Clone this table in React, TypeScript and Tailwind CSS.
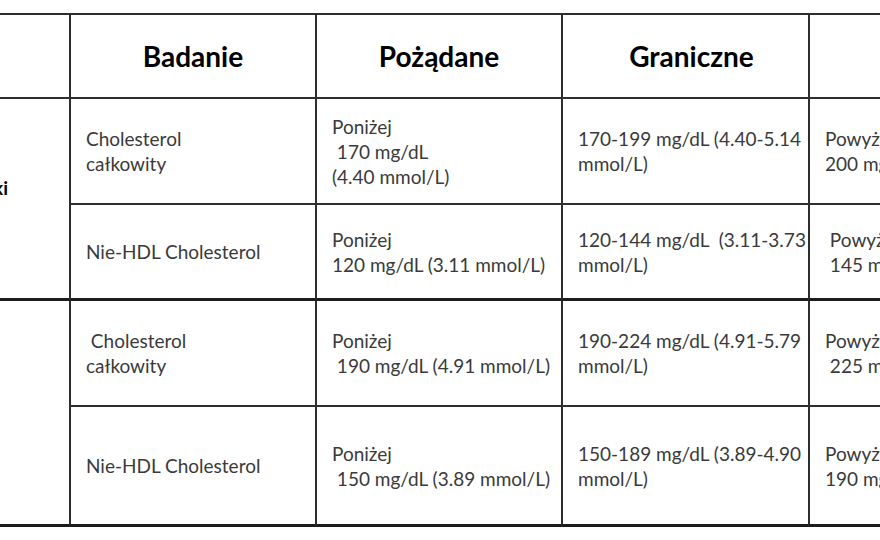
import React from 'react';

type Row = {
  test: string[];
  desired: string[];
  border: string[];
  high: string[];
  last?: boolean;
};

const rows: Row[] = [
  {
    test: ['Cholesterol', 'całkowity'],
    desired: ['Poniżej', ' 170 mg/dL', '(4.40 mmol/L)'],
    border: ['170-199 mg/dL (4.40-5.14', 'mmol/L)'],
    high: ['Powyżej', '200 mg/dL (5.17 mmol/L)'],
  },
  {
    test: ['Nie-HDL Cholesterol'],
    desired: ['Poniżej', '120 mg/dL (3.11 mmol/L)'],
    border: ['120-144 mg/dL  (3.11-3.73', 'mmol/L)'],
    high: [' Powyżej', ' 145 mg/dL (3.76 mmol/L)'],
    last: true,
  },
  {
    test: [' Cholesterol', 'całkowity'],
    desired: ['Poniżej', ' 190 mg/dL (4.91 mmol/L)'],
    border: ['190-224 mg/dL (4.91-5.79', 'mmol/L)'],
    high: ['Powyżej', ' 225 mg/dL (5.82 mmol/L)'],
  },
  {
    test: ['Nie-HDL Cholesterol'],
    desired: ['Poniżej', ' 150 mg/dL (3.89 mmol/L)'],
    border: ['150-189 mg/dL (3.89-4.90', 'mmol/L)'],
    high: ['Powyżej', '190 mg/dL (4.91 mmol/L)'],
    last: true,
  },
];

const heights = ['h-[106px]', 'h-[96px]', 'h-[106px]', 'h-[120px]'];

function Cell({ lines, last, h }: { lines: string[]; last?: boolean; h: string }) {
  return (
    <div
      className={`${h} border-l-2 border-[#2e2e2e] px-[15px] flex flex-col justify-center ${
        last ? 'border-b-[3px] border-b-[#1c1c1c]' : 'border-b-2'
      }`}
    >
      {lines.map((l, i) => (
        <div key={i} className="whitespace-pre leading-[25px]">
          {l}
        </div>
      ))}
    </div>
  );
}

export default function App() {
  const headers = [
    { t: 'Badanie', pad: '' },
    { t: 'Pożądane', pad: '' },
    { t: 'Graniczne', pad: 'pl-[12px]' },
    { t: 'Wysokie', pad: 'pl-[6px]' },
  ];
  return (
    <div
      className="w-[880px] h-[540px] overflow-hidden bg-white pt-[13px]"
      style={{ fontFamily: 'Lato, "Noto Sans", sans-serif' }}
    >
      <div className="grid grid-cols-[69px_246px_246px_247px_246px] border-t-2 border-[#2e2e2e] text-[19px] text-[#3a3a3a]">
        {/* header */}
        <div className="h-[84px] border-b-2 border-[#2e2e2e]" />
        {headers.map((h) => (
          <div
            key={h.t}
            className={`h-[84px] border-l-2 border-b-2 border-[#2e2e2e] flex items-center justify-center text-[28px] font-bold text-black ${h.pad}`}
          >
            {h.t}
          </div>
        ))}

        {/* group 1 label */}
        <div className="row-span-2 border-b-[3px] border-[#1c1c1c] flex items-center justify-end pr-[61px] pb-[20px] overflow-hidden">
          <span className="whitespace-nowrap font-bold text-black">Dzieci i nastolatki</span>
        </div>
        {rows.slice(0, 2).map((r, i) => (
          <React.Fragment key={i}>
            <Cell lines={r.test} last={r.last} h={heights[i]} />
            <Cell lines={r.desired} last={r.last} h={heights[i]} />
            <Cell lines={r.border} last={r.last} h={heights[i]} />
            <Cell lines={r.high} last={r.last} h={heights[i]} />
          </React.Fragment>
        ))}

        {/* group 2 label */}
        <div className="row-span-2 border-b-[3px] border-[#1c1c1c]" />
        {rows.slice(2).map((r, i) => (
          <React.Fragment key={i}>
            <Cell lines={r.test} last={r.last} h={heights[i + 2]} />
            <Cell lines={r.desired} last={r.last} h={heights[i + 2]} />
            <Cell lines={r.border} last={r.last} h={heights[i + 2]} />
            <Cell lines={r.high} last={r.last} h={heights[i + 2]} />
          </React.Fragment>
        ))}
      </div>
    </div>
  );
}
